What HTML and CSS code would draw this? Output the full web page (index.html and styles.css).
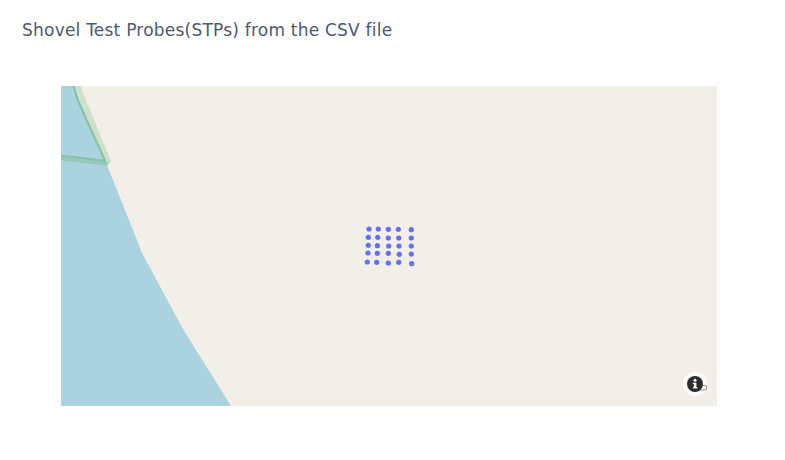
FILE: index.html
```html
<!DOCTYPE html>
<html lang="en">
<head>
<meta charset="utf-8">
<title>Shovel Test Probes</title>
<link rel="stylesheet" href="styles.css">
</head>
<body>
<main class="figure">
  <h1 class="title">Shovel Test Probes(STPs) from the CSV file</h1>
  <div class="map">
    <svg class="map-svg" width="656" height="320" viewBox="61 86 656 320" xmlns="http://www.w3.org/2000/svg">
      <rect class="land" x="61" y="86" width="656" height="320"/>
      <path class="water" d="M61 86H74L107 165L115 185L137 240L142 253L183 329L231 406H61Z"/>
      <path class="road-light" d="M76.500 84L108 161"/>
      <path class="road-thick" d="M59 157.800L106 163.500"/>
      <path class="road-dark" d="M73 84L78 101L105 160.500"/>
      <path class="road-dark" d="M59 155.300L105 160.800"/>
      <g class="dots">
        <circle cx="369" cy="229" r="2.600"/><circle cx="378.300" cy="229" r="2.600"/><circle cx="388.300" cy="229.300" r="2.600"/><circle cx="398.300" cy="229.300" r="2.600"/><circle cx="411.300" cy="229.700" r="2.600"/>
        <circle cx="368.300" cy="237.300" r="2.600"/><circle cx="377.700" cy="237.300" r="2.600"/><circle cx="388.300" cy="238" r="2.600"/><circle cx="398.700" cy="238" r="2.600"/><circle cx="411.300" cy="238" r="2.600"/>
        <circle cx="368.300" cy="245.300" r="2.600"/><circle cx="377.300" cy="245.700" r="2.600"/><circle cx="388.700" cy="246" r="2.600"/><circle cx="399" cy="246" r="2.600"/><circle cx="411.300" cy="246" r="2.600"/>
        <circle cx="368" cy="253" r="2.600"/><circle cx="377.300" cy="253.300" r="2.600"/><circle cx="388.300" cy="253.300" r="2.600"/><circle cx="399.300" cy="254.300" r="2.600"/><circle cx="411.300" cy="254" r="2.600"/>
        <circle cx="367.300" cy="262" r="2.600"/><circle cx="376.700" cy="262.300" r="2.600"/><circle cx="388.300" cy="263" r="2.600"/><circle cx="398.700" cy="262.300" r="2.600"/><circle cx="411.700" cy="263.700" r="2.600"/>
      </g>
    </svg>
    <svg class="info" width="28" height="28" viewBox="0 0 28 28" xmlns="http://www.w3.org/2000/svg">
      <circle class="info-halo" cx="12" cy="12" r="12"/>
      <rect class="info-tab" x="15.500" y="13.500" width="8" height="4.500" rx="1.500"/>
      <circle class="info-disc" cx="12" cy="12" r="8"/>
      <circle class="info-mark" cx="12" cy="8.200" r="1.500"/>
      <path class="info-mark" d="M9.800 10.800H13.400V15.200H14.400V16.600H9.800V15.200H10.900V12.200H9.800Z"/>
    </svg>
  </div>
</main>
</body>
</html>
```
FILE: styles.css
```css
html, body {
  margin: 0;
  padding: 0;
  background: #fff;
}
.figure {
  width: 785px;
  height: 460px;
  box-sizing: border-box;
  padding: 19px 68px 0 61px;
  overflow: hidden;
}
.title {
  margin: 0 0 0 -39px;
  height: 67px;
  font: 400 17px/22px "DejaVu Sans", Verdana, sans-serif;
  letter-spacing: .22px;
  color: #4a5a74;
  white-space: nowrap;
}
.map {
  position: relative;
  width: 656px;
  height: 320px;
}
.map-svg {
  display: block;
}
.land { fill: #f2efe9; }
.water { fill: #aad3df; }
.road-light, .road-thick, .road-dark {
  fill: none;
  stroke-linecap: round;
  stroke-linejoin: round;
}
.road-light { stroke: #cfe0c8; stroke-width: 5.500; }
.road-thick { stroke: #97c8bc; stroke-width: 4.500; }
.road-dark { stroke: #85c2a6; stroke-width: 2; }
.dots circle { fill: #636efa; }
.info {
  position: absolute;
  left: 622px;
  top: 286px;
}
.info-halo { fill: #fff; fill-opacity: .7; }
.info-tab { fill: #fff; stroke: #666; stroke-width: .7; }
.info-disc { fill: #2c2c2c; }
.info-mark { fill: #fff; }
```
